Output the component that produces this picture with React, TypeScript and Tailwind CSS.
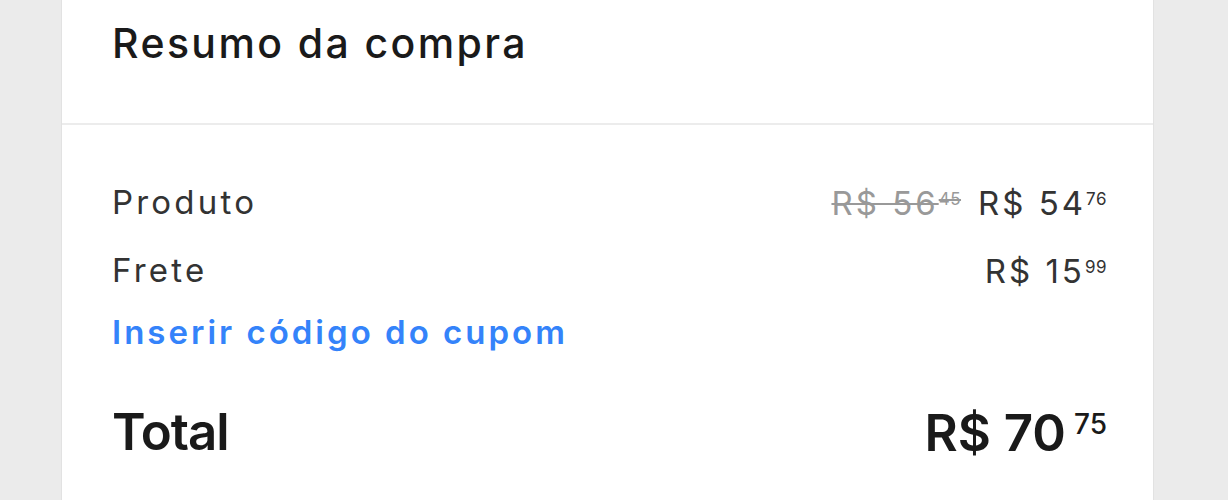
import React from "react";

export default function App() {
  return (
    <div className="min-h-[500px] w-full bg-[#ebebeb] pl-[61px] pr-[74px] font-['Inter',sans-serif]">
      <div className="min-h-[500px] bg-white border-x border-[#e2e2e2]">
        <div className="h-[123px] pl-[50px] pr-[46px] pt-[19px]">
          <h1 className="text-[41px] leading-[48px] font-medium text-[#1a1a1a] tracking-[2.4px]">Resumo da compra</h1>
        </div>
        <div className="h-[2px] bg-[#ececec]" />
        <div className="pl-[50px] pr-[46px] pt-[52px]">
          <div className="flex items-center justify-between h-[52px] text-[33px] text-[#333333] tracking-[3.2px]">
            <span>Produto</span>
            <span className="flex items-start gap-[17px] tracking-[3px]">
              <span className="inline-flex items-start text-[#999999] line-through decoration-[2px] leading-none">
                <span>R$ 56</span>
                <span className="text-[17px] leading-none mt-[4px] tracking-[0.5px]">45</span>
              </span>
              <span className="inline-flex items-start leading-none">
                <span>R$ 54</span>
                <span className="text-[17px] leading-none mt-[4px] tracking-[0.5px]">76</span>
              </span>
            </span>
          </div>
          <div className="flex items-center justify-between h-[52px] mt-[16px] text-[33px] text-[#333333] tracking-[3.2px]">
            <span>Frete</span>
            <span className="inline-flex items-start leading-none tracking-[3px]">
              <span>R$ 15</span>
              <span className="text-[17px] leading-none mt-[4px] tracking-[0.5px]">99</span>
            </span>
          </div>
          <div className="h-[52px] mt-[10px] flex items-center text-[33px] font-semibold text-[#3483fa] tracking-[3px]">
            Inserir código do cupom
          </div>
          <div className="flex items-center justify-between h-[60px] mt-[43px] text-[51px] font-semibold text-[#1a1a1a]">
            <span className="tracking-[-1px]">Total</span>
            <span className="inline-flex items-start leading-none">
              <span>R$ 70</span>
              <span className="text-[28px] leading-none mt-[3px] ml-[8px] font-medium">75</span>
            </span>
          </div>
        </div>
      </div>
    </div>
  );
}
